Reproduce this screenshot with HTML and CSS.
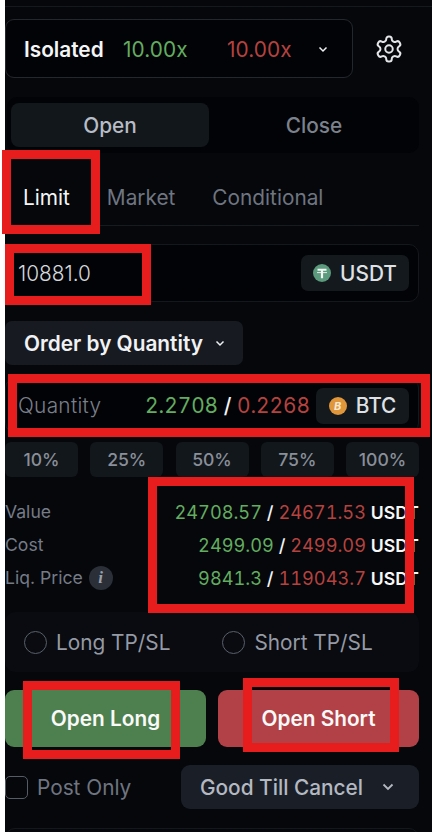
FILE: index.html
```html
<!DOCTYPE html>
<html>
    <head>
    <title>Order form</title>
    <meta charset="UTF-8">
    <meta name="viewport" content="width=device-width, initial-scale=1.0">
    <link rel="stylesheet" href="styles.css">
    </head>

    <body>
        <div class="panel">
            <div class="linea-top"></div>

            <div class="cabecera">
                <div class="margen">
                    <span class="margen-tipo">Isolated</span>
                    <span class="verde margen-long">10.00x</span>
                    <span class="rojo margen-short">10.00x</span>
                    <svg class="chevron-chico" viewBox="0 0 12 12"><path d="M2.5 4.5 6 8l3.5-3.5"/></svg>
                </div>
                <svg class="engrane" viewBox="0 0 24 24">
                    <path d="M12.22 2h-.44a2 2 0 0 0-2 2v.18a2 2 0 0 1-1 1.73l-.43.25a2 2 0 0 1-2 0l-.15-.08a2 2 0 0 0-2.73.73l-.22.38a2 2 0 0 0 .73 2.73l.15.1a2 2 0 0 1 1 1.72v.51a2 2 0 0 1-1 1.74l-.15.09a2 2 0 0 0-.73 2.73l.22.38a2 2 0 0 0 2.73.73l.15-.08a2 2 0 0 1 2 0l.43.25a2 2 0 0 1 1 1.73V20a2 2 0 0 0 2 2h.44a2 2 0 0 0 2-2v-.18a2 2 0 0 1 1-1.73l.43-.25a2 2 0 0 1 2 0l.15.08a2 2 0 0 0 2.73-.73l.22-.39a2 2 0 0 0-.73-2.73l-.15-.08a2 2 0 0 1-1-1.74v-.5a2 2 0 0 1 1-1.74l.15-.09a2 2 0 0 0 .73-2.73l-.22-.38a2 2 0 0 0-2.73-.73l-.15.08a2 2 0 0 1-2 0l-.43-.25a2 2 0 0 1-1-1.73V4a2 2 0 0 0-2-2z"/>
                    <circle cx="12" cy="12" r="3"/>
                </svg>
            </div>

            <div class="lados">
                <div class="lado activo">Open</div>
                <div class="lado">Close</div>
            </div>

            <div class="tipos">
                <span class="tipo activo">Limit</span>
                <span class="tipo">Market</span>
                <span class="tipo">Conditional</span>
            </div>

            <div class="caja caja-precio">
                <span class="valor-precio">10881.0</span>
                <div class="moneda">
                    <svg class="icono-moneda" viewBox="0 0 18 18">
                        <circle cx="9" cy="9" r="9" fill="#5b9a7c"/>
                        <path d="M4.5 4.8h9v2H10.1v7.4H7.9V6.8H4.5z" fill="#f2f5f3"/>
                        <path d="M4 8.6h10" stroke="#f2f5f3" stroke-width="0.9"/>
                    </svg>
                    USDT
                </div>
            </div>

            <div class="orden">
                Order by Quantity
                <svg class="chevron-chico" viewBox="0 0 12 12"><path d="M2.5 4.5 6 8l3.5-3.5"/></svg>
            </div>

            <div class="caja caja-cantidad">
                <span class="etiqueta-cantidad">Quantity</span>
                <span class="cantidades"><span class="verde">2.2708</span> <span class="barra">/</span> <span class="rojo">0.2268</span></span>
                <div class="moneda moneda-btc">
                    <span class="icono-btc">B</span>
                    BTC
                </div>
            </div>

            <div class="porcentajes">
                <div class="porcentaje">10%</div>
                <div class="porcentaje">25%</div>
                <div class="porcentaje">50%</div>
                <div class="porcentaje">75%</div>
                <div class="porcentaje">100%</div>
            </div>

            <div class="datos">
                <div class="fila">
                    <span class="etiqueta">Value</span>
                    <span class="numeros"><span class="verde">24708.57</span> <span class="barra">/</span> <span class="rojo">24671.53</span> <b class="unidad">USDT</b></span>
                </div>
                <div class="fila">
                    <span class="etiqueta">Cost</span>
                    <span class="numeros"><span class="verde">2499.09</span> <span class="barra">/</span> <span class="rojo">2499.09</span> <b class="unidad">USDT</b></span>
                </div>
                <div class="fila">
                    <span class="etiqueta">Liq. Price <span class="info">i</span></span>
                    <span class="numeros"><span class="verde">9841.3</span> <span class="barra">/</span> <span class="rojo">119043.7</span> <b class="unidad">USDT</b></span>
                </div>
            </div>

            <div class="tpsl">
                <label class="opcion"><span class="radio"></span>Long TP/SL</label>
                <label class="opcion"><span class="radio"></span>Short TP/SL</label>
            </div>

            <div class="botones">
                <button class="boton boton-long">Open Long</button>
                <button class="boton boton-short">Open Short</button>
            </div>

            <div class="pie">
                <label class="post"><span class="check"></span>Post Only</label>
                <div class="vigencia">
                    Good Till Cancel
                    <svg class="chevron-grande" viewBox="0 0 14 14"><path d="M2.5 4.5 7 9l4.5-4.5"/></svg>
                </div>
            </div>

            <div class="caja-fin"></div>
        </div>

        <!-- marcas rojas encima de la captura -->
        <div class="marca marca-limit"></div>
        <div class="marca marca-precio"></div>
        <div class="marca marca-cantidad"></div>
        <div class="marca marca-datos"></div>
        <div class="marca marca-long"></div>
        <div class="marca marca-short"></div>
    </body>
</html>
```

FILE: styles.css
```css
*{
    box-sizing: border-box;
}

html, body{
    margin: 0;
    height: 832px;
    overflow: hidden;
    background-color: white;
}

body{
    position: relative;
    font-family: Inter, "Liberation Sans", sans-serif;
}

.panel{
    margin-left: 5px;
    height: 832px;
    padding-right: 13px;
    padding-top: 6px;
    background-color: #05070b;
    overflow: hidden;
}

.verde{
    color: #63ad60;
}

.rojo{
    color: #b5423f;
}

.barra{
    color: #f2f3f5;
    font-weight: 500;
}

.linea-top{
    height: 1px;
    margin-right: -13px;
    background-color: #15181d;
}

.cabecera{
    display: flex;
    align-items: center;
    margin-top: 12px;
}

.margen{
    display: flex;
    align-items: center;
    width: 348px;
    height: 59px;
    padding-left: 18px;
    padding-top: 1px;
    border: 1px solid #24272d;
    border-radius: 9px;
    background-color: #020306;
    font-size: 20.8px;
}

.margen-tipo{
    width: 99px;
    font-weight: 600;
    color: #f4f5f6;
}

.margen-long{
    width: 104px;
    letter-spacing: 0.1px;
}

.margen-short{
    width: 90px;
    letter-spacing: 0.1px;
}

.chevron-chico{
    width: 12px;
    height: 12px;
    fill: none;
    stroke: #f0f1f3;
    stroke-width: 1.5;
}

.engrane{
    width: 30px;
    height: 30px;
    margin-left: 21px;
    fill: none;
    stroke: #e3e5e8;
    stroke-width: 1.6;
}

.lados{
    display: flex;
    height: 56px;
    margin-top: 19px;
    margin-left: 2px;
    padding: 6px 0 6px 4px;
    border-radius: 10px;
    background-color: #020306;
}

.lado{
    flex: 1;
    display: flex;
    align-items: center;
    justify-content: center;
    border-radius: 8px;
    font-size: 20.8px;
    font-weight: 500;
    color: #7c828d;
}

.lado.activo{
    flex: 0 0 198px;
    background-color: #12171b;
    color: #b7bcc6;
}

.tipos{
    display: flex;
    gap: 37px;
    height: 73px;
    padding-top: 32px;
    padding-left: 18px;
    border-bottom: 1px solid #171a1f;
    font-size: 20.8px;
    color: #6f7581;
}

.tipo.activo{
    color: #f4f5f6;
}

.caja{
    display: flex;
    align-items: center;
    justify-content: space-between;
    border: 1px solid #14171c;
    border-radius: 10px;
    background-color: #020306;
}

.caja-precio{
    height: 58px;
    margin-top: 18px;
    padding: 0 9px 0 12px;
}

.valor-precio{
    font-size: 20.8px;
    font-weight: 300;
    color: #d4d7dc;
}

.moneda{
    display: flex;
    align-items: center;
    justify-content: center;
    gap: 9px;
    width: 108px;
    height: 36px;
    border-radius: 7px;
    background-color: #14191e;
    font-size: 20.8px;
    font-weight: 500;
    color: #dfe1e5;
}

.icono-moneda{
    width: 18px;
    height: 18px;
}

.moneda-btc{
    width: 93px;
}

.icono-btc{
    display: flex;
    align-items: center;
    justify-content: center;
    width: 18px;
    height: 18px;
    border-radius: 50%;
    background-color: #e0963a;
    font-size: 11px;
    font-weight: 700;
    font-style: italic;
    color: #f8e9d2;
}

.orden{
    display: inline-flex;
    align-items: center;
    gap: 11px;
    width: 238px;
    height: 44px;
    margin-top: 19px;
    padding-left: 19px;
    border-radius: 7px;
    background-color: #171b21;
    font-size: 20.8px;
    font-weight: 600;
    color: #f1f2f4;
    vertical-align: top;
}

.caja-cantidad{
    height: 55px;
    margin-top: 13px;
    padding: 0 9px 0 12px;
}

.etiqueta-cantidad{
    font-size: 20.8px;
    font-weight: 300;
    letter-spacing: 0.3px;
    color: #7a7f8a;
}

.cantidades{
    margin-left: auto;
    margin-right: 6px;
    font-size: 20.8px;
    font-variant-numeric: tabular-nums;
}

.porcentajes{
    display: flex;
    justify-content: space-between;
    margin-top: 9px;
}

.porcentaje{
    display: flex;
    align-items: center;
    justify-content: center;
    width: 73px;
    height: 35px;
    border-radius: 6px;
    background-color: #12171b;
    font-size: 17.6px;
    font-weight: 500;
    color: #8a8f9a;
}

.datos{
    margin-top: 18px;
}

.fila{
    display: flex;
    align-items: center;
    justify-content: space-between;
    height: 33px;
    white-space: nowrap;
}

.etiqueta{
    display: flex;
    align-items: center;
    gap: 6px;
    font-size: 17.6px;
    color: #757b87;
}

.info{
    display: flex;
    align-items: center;
    justify-content: center;
    width: 24px;
    height: 24px;
    border-radius: 50%;
    background-color: #2a2f38;
    font-family: "Liberation Serif", serif;
    font-size: 17px;
    font-weight: 700;
    font-style: italic;
    color: #9aa0aa;
}

.numeros{
    font-size: 18.2px;
    font-variant-numeric: tabular-nums;
}

.unidad{
    font-size: 17.6px;
    font-weight: 600;
    color: #f7f7f8;
}

.tpsl{
    display: flex;
    align-items: center;
    gap: 52px;
    height: 60px;
    margin-top: 18px;
    padding-left: 19px;
    border-radius: 10px;
    background-color: #090b10;
}

.opcion{
    display: flex;
    align-items: center;
    gap: 9px;
    font-size: 20.8px;
    color: #959aa5;
}

.radio{
    width: 23px;
    height: 23px;
    border: 1px solid #5a5f69;
    border-radius: 50%;
}

.botones{
    display: flex;
    gap: 12px;
    margin-top: 18px;
}

.boton{
    flex: 1;
    height: 57px;
    border: none;
    border-radius: 9px;
    padding: 0;
    font-family: inherit;
    font-size: 20.8px;
    font-weight: 600;
    color: #f8f9f8;
}

.boton-long{
    background-color: #4e7f4e;
}

.boton-short{
    background-color: #b14146;
}

.pie{
    display: flex;
    align-items: center;
    justify-content: space-between;
    margin-top: 18px;
}

.post{
    display: flex;
    align-items: center;
    gap: 9px;
    font-size: 20.8px;
    color: #6f7581;
}

.check{
    width: 23px;
    height: 23px;
    border: 1px solid #565b65;
    border-radius: 5px;
}

.vigencia{
    display: flex;
    align-items: center;
    gap: 18px;
    width: 238px;
    height: 44px;
    padding-left: 19px;
    border-radius: 9px;
    background-color: #1a1f27;
    font-size: 20.8px;
    font-weight: 500;
    color: #b4b8c1;
}

.chevron-grande{
    width: 14px;
    height: 14px;
    fill: none;
    stroke: #b4b8c1;
    stroke-width: 1.8;
}

.caja-fin{
    height: 40px;
    margin-top: 19px;
    border: 1px solid #14171c;
    border-radius: 10px;
}

.marca{
    position: absolute;
    border: 9px solid #e71d1d;
}

.marca-limit{
    left: 2px;
    top: 150px;
    width: 98px;
    height: 84px;
}

.marca-precio{
    left: 5px;
    top: 244px;
    width: 146px;
    height: 61px;
}

.marca-cantidad{
    left: 8px;
    top: 374px;
    width: 422px;
    height: 63px;
}

.marca-datos{
    left: 148px;
    top: 477px;
    width: 266px;
    height: 136px;
}

.marca-long{
    left: 23px;
    top: 681px;
    width: 157px;
    height: 78px;
}

.marca-short{
    left: 243px;
    top: 678px;
    width: 156px;
    height: 74px;
}
```
